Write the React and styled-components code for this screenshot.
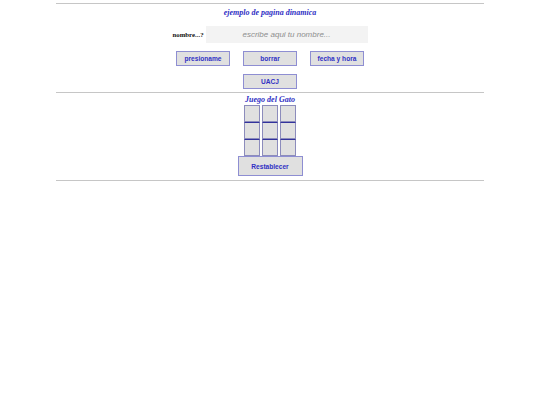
import styled, { createGlobalStyle } from "styled-components";

const GlobalStyle = createGlobalStyle`
  body {
    margin: 0;
    background: #ffffff;
    font-family: "Liberation Serif", serif;
  }
`;

const cells = [0, 1, 2, 3, 4, 5, 6, 7, 8];

export default function App() {
  return (
    <>
      <GlobalStyle />
      <Page>
        <Rule />
        <Title>ejemplo de pagina dinamica</Title>
        <InputRow>
          <Label>nombre...?</Label>
          <NameInput placeholder="escribe aqui tu nombre..." />
        </InputRow>
        <ButtonRow>
          <Button>presioname</Button>
          <Button>borrar</Button>
          <Button>fecha y hora</Button>
        </ButtonRow>
        <ButtonRow>
          <Button>UACJ</Button>
        </ButtonRow>
        <Rule $top={3} />
        <GameTitle>Juego del Gato</GameTitle>
        <Board>
          {cells.map((i) => (
            <Cell key={i} $inner={i >= 3} />
          ))}
        </Board>
        <ResetButton>Restablecer</ResetButton>
        <Rule $top={4} />
      </Page>
    </>
  );
}

const Page = styled.div`
  display: flex;
  flex-direction: column;
  align-items: center;
  margin: 0 56px;
  padding-top: 3px;
`;

const Rule = styled.div`
  align-self: stretch;
  height: 1px;
  background: #c6c6c6;
  margin-top: ${(p) => p.$top || 0}px;
`;

const Title = styled.div`
  margin-top: 4px;
  font-family: "Liberation Serif", serif;
  font-size: 8px;
  line-height: 10px;
  font-weight: bold;
  font-style: italic;
  color: #2f2fc4;
`;

const InputRow = styled.div`
  display: flex;
  align-items: center;
  gap: 1px;
  margin-top: 8px;
  height: 17px;
`;

const Label = styled.span`
  font-family: "Liberation Serif", serif;
  font-size: 6.8px;
  font-weight: bold;
  color: #111111;
  width: 32px;
`;

const NameInput = styled.input`
  box-sizing: border-box;
  width: 162px;
  height: 17px;
  border: none;
  outline: none;
  background: #f3f3f3;
  padding: 0;
  text-align: center;
  font-family: "Liberation Sans", sans-serif;
  font-size: 8px;
  font-style: italic;
  &::placeholder {
    color: #8e8e8e;
  }
`;

const ButtonRow = styled.div`
  display: flex;
  gap: 13px;
  margin-top: 8px;
`;

const Button = styled.button`
  box-sizing: border-box;
  width: 54px;
  height: 15px;
  padding: 0;
  background: #e0e0e0;
  border: 1px solid #8e8ed2;
  font-family: "Liberation Sans", sans-serif;
  font-size: 6.6px;
  font-weight: bold;
  color: #3030c4;
`;

const GameTitle = styled(Title)`
  margin-top: 2px;
`;

const Board = styled.div`
  display: grid;
  grid-template-columns: repeat(3, 16px);
  grid-auto-rows: 17px;
  column-gap: 2px;
`;

const Cell = styled.div`
  box-sizing: border-box;
  background: #e0e0e0;
  border: 1px solid #8c8cbc;
  border-top-color: ${(p) => (p.$inner ? "#33339c" : "#8c8cbc")};
`;

const ResetButton = styled(Button)`
  width: 65px;
  height: 20px;
`;
